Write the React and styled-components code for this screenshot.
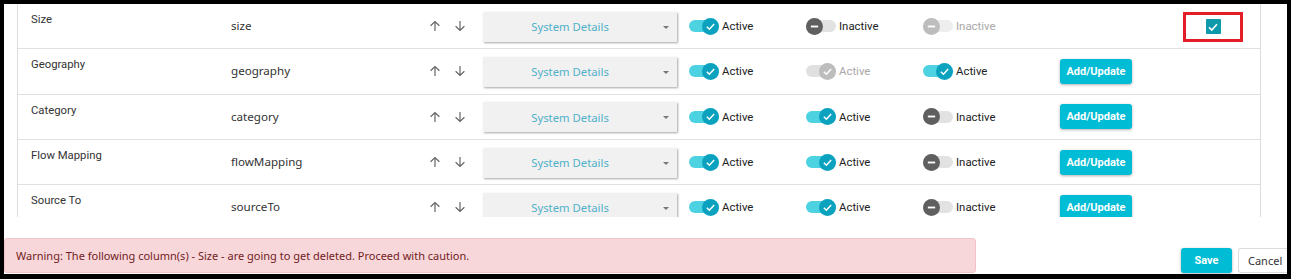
import React from "react";
import styled, { createGlobalStyle } from "styled-components";

const Global = createGlobalStyle`
  html, body { margin: 0; padding: 0; background: #fff; }
  * { box-sizing: border-box; }
`;

const Frame = styled.div`
  width: 1291px;
  height: 279px;
  border-style: solid;
  border-color: #000;
  border-width: 4px 4px 5px 4px;
  background: #fff;
  overflow: hidden;
  display: flex;
  flex-direction: column;
`;

const Viewport = styled.div`
  margin-left: 13px;
  width: 1244px;
  height: 213px;
  overflow: hidden;
  border-left: 1px solid #dedede;
  border-right: 1px solid #dedede;
  flex-shrink: 0;
`;

const Row = styled.div`
  height: 45.33px;
  border-bottom: 1px solid #e0e0e0;
  display: grid;
  grid-template-columns: 200px 195px 57px 194px 117px 117px 149px 123px 60px;
  padding-left: 13px;
  align-items: center;
`;

const Label = styled.div`
  align-self: start;
  padding-top: 8px;
  font: 11.3px/16px Roboto, sans-serif;
  color: #333;
`;

const Key = styled.div`
  font: 11.6px/16px "Noto Sans", sans-serif;
  color: #333;
`;

const Arrows = styled.div`
  display: flex;
  gap: 13px;
  padding-left: 3px;
  align-items: center;
`;

const Select = styled.div`
  position: relative;
  height: 30px;
  margin-top: 1px;
  background: #f1f1f1;
  box-shadow: 1px 1px 2px rgba(0, 0, 0, 0.35);
  display: flex;
  align-items: center;
  justify-content: center;
  padding-right: 20px;
  font: 11.3px "Noto Sans", sans-serif;
  color: #4fb0ca;
`;

const Caret = styled.span`
  position: absolute;
  right: 8px;
  top: 14px;
  width: 0;
  height: 0;
  border-left: 3px solid transparent;
  border-right: 3px solid transparent;
  border-top: 3px solid #777;
`;

const ToggleCell = styled.div`
  padding-left: 12px;
  display: flex;
  align-items: center;
  gap: 3px;
`;

const Track = styled.span`
  position: relative;
  width: 30px;
  height: 17px;
  display: inline-block;
  &::before {
    content: "";
    position: absolute;
    left: 0;
    right: 0;
    top: 2.5px;
    height: 12px;
    border-radius: 6px;
    background: ${(p) =>
      p.$on ? (p.$disabled ? "#e0e0e0" : "#4dd2e2") : p.$disabled ? "#eeeeee" : "#e2e2e2"};
  }
`;

const Knob = styled.span`
  position: absolute;
  top: 0;
  left: ${(p) => (p.$on ? "13px" : "0")};
  width: 17px;
  height: 17px;
  border-radius: 50%;
  background: ${(p) =>
    p.$disabled ? "#bdbdbd" : p.$on ? "#0aa2bf" : "#5f5f5f"};
  display: flex;
  align-items: center;
  justify-content: center;
`;

const ToggleText = styled.span`
  font: 11.4px Roboto, sans-serif;
  color: ${(p) => (p.$disabled ? "#a8a8a8" : "#222")};
`;

const Button = styled.button`
  height: 25px;
  border: none;
  border-radius: 3px;
  background: #00bcd4;
  color: #fff;
  font: bold 11px Roboto, sans-serif;
  box-shadow: 0 1px 3px rgba(0, 0, 0, 0.3);
  padding: 0 6px;
  cursor: pointer;
`;

const AddButton = styled(Button)`
  width: 72px;
  justify-self: start;
`;

const Highlight = styled.div`
  width: 60px;
  height: 30px;
  margin-top: 1px;
  border: 3px solid #e41e26;
  display: flex;
  align-items: center;
  justify-content: center;
`;

const CheckBox = styled.span`
  width: 15px;
  height: 15px;
  border-radius: 1px;
  background: #0e9aab;
  display: flex;
  align-items: center;
  justify-content: center;
`;

const Footer = styled.div`
  margin-top: 21px;
  display: flex;
  align-items: flex-end;
`;

const Warning = styled.div`
  width: 972px;
  height: 35px;
  background: #f8d7da;
  border: 1px solid #f2c4c8;
  border-radius: 3px;
  display: flex;
  align-items: center;
  padding-left: 11px;
  font: 11px "Noto Sans", sans-serif;
  color: #721c24;
`;

const Actions = styled.div`
  margin-left: auto;
  display: flex;
  gap: 6px;
  align-items: flex-end;
`;

const SaveButton = styled(Button)`
  width: 51px;
  margin-bottom: 0;
`;

const CancelButton = styled.button`
  width: 49px;
  height: 25px;
  background: #fff;
  border: 1px solid #dcdcdc;
  border-right: none;
  border-radius: 3px 0 0 3px;
  font: 11px "Noto Sans", sans-serif;
  color: #333;
  padding: 0 0 0 9px;
  text-align: left;
`;

const Arrow = ({ down }) => (
  <svg width="12" height="12" viewBox="0 0 12 12" fill="none" stroke="#666" strokeWidth="1.2">
    {down ? (
      <path d="M6 1V10.5M1.6 6.2L6 10.5L10.4 6.2" />
    ) : (
      <path d="M6 11V1.5M1.6 5.8L6 1.5L10.4 5.8" />
    )}
  </svg>
);

const Check = ({ size = 11 }) => (
  <svg width={size} height={size} viewBox="0 0 12 12" fill="none" stroke="#fff" strokeWidth="1.6">
    <path d="M2 6.3L4.8 9L10 3.2" />
  </svg>
);

const Minus = () => (
  <svg width="11" height="11" viewBox="0 0 12 12" fill="none" stroke="#fff" strokeWidth="2">
    <path d="M2 6H10" />
  </svg>
);

const Toggle = ({ on, disabled }) => (
  <ToggleCell>
    <Track $on={on} $disabled={disabled}>
      <Knob $on={on} $disabled={disabled}>
        {on ? <Check /> : <Minus />}
      </Knob>
    </Track>
    <ToggleText $disabled={disabled}>{on ? "Active" : "Inactive"}</ToggleText>
  </ToggleCell>
);

const rows = [
  { label: "Size", key: "size", t: [[1, 0], [0, 0], [0, 1]], del: true },
  { label: "Geography", key: "geography", t: [[1, 0], [1, 1], [1, 0]] },
  { label: "Category", key: "category", t: [[1, 0], [1, 0], [0, 0]] },
  { label: "Flow Mapping", key: "flowMapping", t: [[1, 0], [1, 0], [0, 0]] },
  { label: "Source To", key: "sourceTo", t: [[1, 0], [1, 0], [0, 0]] },
];

export default function App() {
  return (
    <>
      <Global />
      <Frame>
        <Viewport>
          {rows.map((r) => (
            <Row key={r.key}>
              <Label>{r.label}</Label>
              <Key>{r.key}</Key>
              <Arrows>
                <Arrow />
                <Arrow down />
              </Arrows>
              <Select>
                System Details
                <Caret />
              </Select>
              {r.t.map(([on, dis], i) => (
                <Toggle key={i} on={!!on} disabled={!!dis} />
              ))}
              {r.del ? <span /> : <AddButton>Add/Update</AddButton>}
              {r.del ? (
                <Highlight>
                  <CheckBox>
                    <Check size={12} />
                  </CheckBox>
                </Highlight>
              ) : (
                <span />
              )}
            </Row>
          ))}
        </Viewport>
        <Footer>
          <Warning>
            Warning: The following column(s) - Size - are going to get deleted. Proceed with caution.
          </Warning>
          <Actions>
            <SaveButton>Save</SaveButton>
            <CancelButton>Cancel</CancelButton>
          </Actions>
        </Footer>
      </Frame>
    </>
  );
}
